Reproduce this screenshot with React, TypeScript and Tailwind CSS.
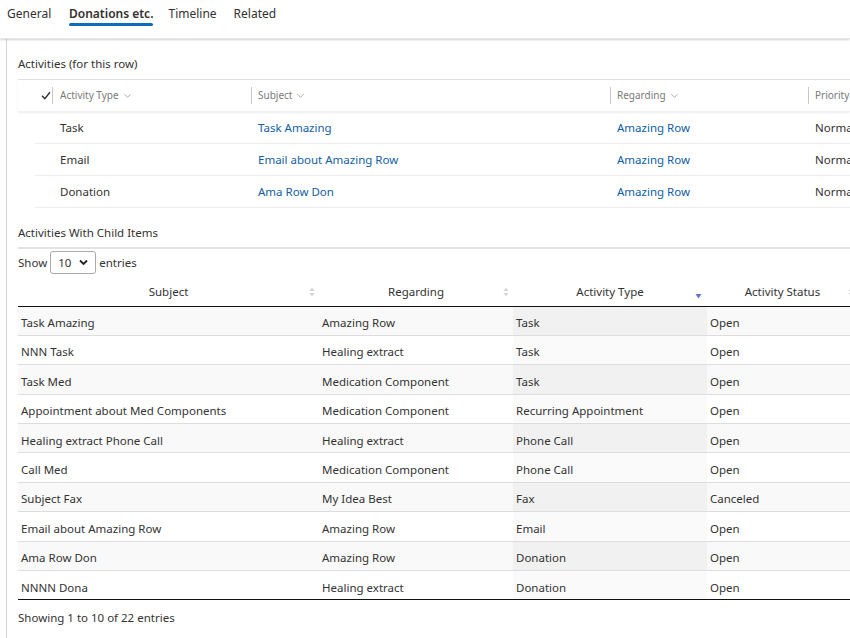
import React from "react";

const font = { fontFamily: '"Noto Sans", "Open Sans", Arial, sans-serif' };

const topRows = [
  { type: "Task", subject: "Task Amazing", regarding: "Amazing Row", priority: "Normal" },
  { type: "Email", subject: "Email about Amazing Row", regarding: "Amazing Row", priority: "Normal" },
  { type: "Donation", subject: "Ama Row Don", regarding: "Amazing Row", priority: "Normal" },
];

const rows = [
  ["Task Amazing", "Amazing Row", "Task", "Open"],
  ["NNN Task", "Healing extract", "Task", "Open"],
  ["Task Med", "Medication Component", "Task", "Open"],
  ["Appointment about Med Components", "Medication Component", "Recurring Appointment", "Open"],
  ["Healing extract Phone Call", "Healing extract", "Phone Call", "Open"],
  ["Call Med", "Medication Component", "Phone Call", "Open"],
  ["Subject Fax", "My Idea Best", "Fax", "Canceled"],
  ["Email about Amazing Row", "Amazing Row", "Email", "Open"],
  ["Ama Row Don", "Amazing Row", "Donation", "Open"],
  ["NNNN Dona", "Healing extract", "Donation", "Open"],
];

function Chevron() {
  return (
    <svg width="9" height="9" viewBox="0 0 10 10" className="ml-1 inline-block shrink-0">
      <path d="M1.5 3.5 L5 7 L8.5 3.5" fill="none" stroke="#9a9a9a" strokeWidth="0.9" />
    </svg>
  );
}

function SortBoth() {
  return (
    <svg width="6" height="11" viewBox="0 0 6 11" className="absolute right-[4px] top-1/2 -translate-y-1/2">
      <path d="M3 1 L5.5 4.5 L0.5 4.5 Z" fill="#d6d6d6" />
      <path d="M3 10 L5.5 6.5 L0.5 6.5 Z" fill="#d6d6d6" />
    </svg>
  );
}

function SortDesc() {
  return (
    <svg width="7" height="6" viewBox="0 0 7 6" className="absolute right-[5px] top-[14px]">
      <path d="M0.5 1 L6.5 1 L3.5 5.5 Z" fill="#6b73c6" />
    </svg>
  );
}

export default function App() {
  return (
    <div className="w-[850px] h-[638px] overflow-hidden bg-white text-[#323130]" style={font}>
      {/* Tabs */}
      <div className="h-[39px] flex items-start pl-[7px] pt-[6px] text-[12px] leading-[16px] shadow-[0_1px_2px_rgba(0,0,0,0.18)] relative z-10 border-b border-[#e6e6e6]">
        <div className="w-[44px] whitespace-nowrap">General</div>
        <div className="ml-[18px] flex flex-col items-center font-semibold whitespace-nowrap">
          <span>Donations etc.</span>
          <span className="h-[3px] w-full bg-[#0f6cbd] rounded-full mt-[1px]" />
        </div>
        <div className="ml-[15px] whitespace-nowrap">Timeline</div>
        <div className="ml-[17px] whitespace-nowrap">Related</div>
      </div>

      <div className="flex h-[599px]">
        <div className="w-[7px] border-r border-[#d4d4d4] shrink-0" />
        <div className="flex-1 pl-[11px] overflow-hidden">
          {/* Section 1 */}
          <div className="pt-[16px] text-[11.5px] h-[40px]">Activities (for this row)</div>
          <div className="border-t border-[#e1e1e1]">
            <div className="h-[32px] flex items-center text-[10px] text-[#7a7a7a] shadow-[0_1px_2px_rgba(0,0,0,0.08)] border-b border-[#f0f0f0] whitespace-nowrap">
              <div className="w-[34px] shrink-0 flex justify-end pr-[1px]">
                <svg width="10" height="9" viewBox="0 0 10 9">
                  <path d="M1 4.8 L3.8 7.6 L9 1.2" fill="none" stroke="#323130" strokeWidth="1.4" />
                </svg>
              </div>
              <div className="w-[199px] shrink-0 flex items-center border-l border-[#c8c8c8] h-[17px] pl-[7px]">
                Activity Type <Chevron />
              </div>
              <div className="w-[359px] shrink-0 flex items-center border-l border-[#c8c8c8] h-[17px] pl-[6px]">
                Subject <Chevron />
              </div>
              <div className="w-[198px] shrink-0 flex items-center border-l border-[#c8c8c8] h-[17px] pl-[6px]">
                Regarding <Chevron />
              </div>
              <div className="w-[80px] shrink-0 flex items-center border-l border-[#c8c8c8] h-[17px] pl-[6px]">
                Priority <Chevron />
              </div>
            </div>
            {topRows.map((r) => (
              <div key={r.type} className="h-[32px] flex items-center text-[11.5px] ml-[17px] border-b border-[#ededed] whitespace-nowrap">
                <div className="w-[216px] shrink-0 pl-[25px]">{r.type}</div>
                <div className="w-[359px] shrink-0 pl-[7px] text-[#115ea3]">{r.subject}</div>
                <div className="w-[198px] shrink-0 pl-[7px] text-[#115ea3]">{r.regarding}</div>
                <div className="w-[80px] shrink-0 pl-[7px]">{r.priority}</div>
              </div>
            ))}
          </div>

          {/* Section 2 */}
          <div className="pt-[16px] text-[11.5px] h-[39px]">Activities With Child Items</div>
          <div className="border-t-2 border-[#e3e3e3] pt-[1px]">
            <div className="flex items-center h-[25px] text-[11.5px] text-[#333]">
              <span>Show</span>
              <div className="mx-[3px] w-[46px] h-[23px] border border-[#aaaaaa] rounded-[3px] flex items-center justify-between px-[7px]">
                <span>10</span>
                <svg width="9" height="7" viewBox="0 0 9 7">
                  <path d="M1 1.5 L4.5 5 L8 1.5" fill="none" stroke="#222" strokeWidth="1.8" />
                </svg>
              </div>
              <span>entries</span>
            </div>
            <table className="mt-[4px] border-collapse text-[11.5px] text-[#333] table-fixed w-[840px]">
              <colgroup>
                <col className="w-[301px]" />
                <col className="w-[194px]" />
                <col className="w-[194px]" />
                <col className="w-[151px]" />
              </colgroup>
              <thead>
                <tr className="h-[27px] border-b border-[#111]">
                  {["Subject", "Regarding", "Activity Type", "Activity Status"].map((h, i) => (
                    <th key={h} className="relative font-normal text-center px-[10px] pb-[1px]">
                      {h}
                      {i === 2 ? <SortDesc /> : <SortBoth />}
                    </th>
                  ))}
                </tr>
              </thead>
              <tbody>
                {rows.map((r, i) => {
                  const odd = i % 2 === 0;
                  return (
                    <tr key={i} className={`h-[29.4px] border-t border-[#dddddd] ${odd ? "bg-[#f9f9f9]" : "bg-white"}`}>
                      <td className="px-[3px] pt-[4px] whitespace-nowrap">{r[0]}</td>
                      <td className="px-[3px] pt-[4px] whitespace-nowrap">{r[1]}</td>
                      <td className={`px-[3px] pt-[4px] whitespace-nowrap ${odd ? "bg-[#f1f1f1]" : "bg-[#fafafa]"}`}>{r[2]}</td>
                      <td className="px-[3px] pt-[4px] whitespace-nowrap">{r[3]}</td>
                    </tr>
                  );
                })}
                <tr className="h-0 border-t border-[#111]"><td colSpan={4} /></tr>
              </tbody>
            </table>
            <div className="pt-[9px] text-[11.5px] text-[#333]">Showing 1 to 10 of 22 entries</div>
          </div>
        </div>
      </div>
    </div>
  );
}
